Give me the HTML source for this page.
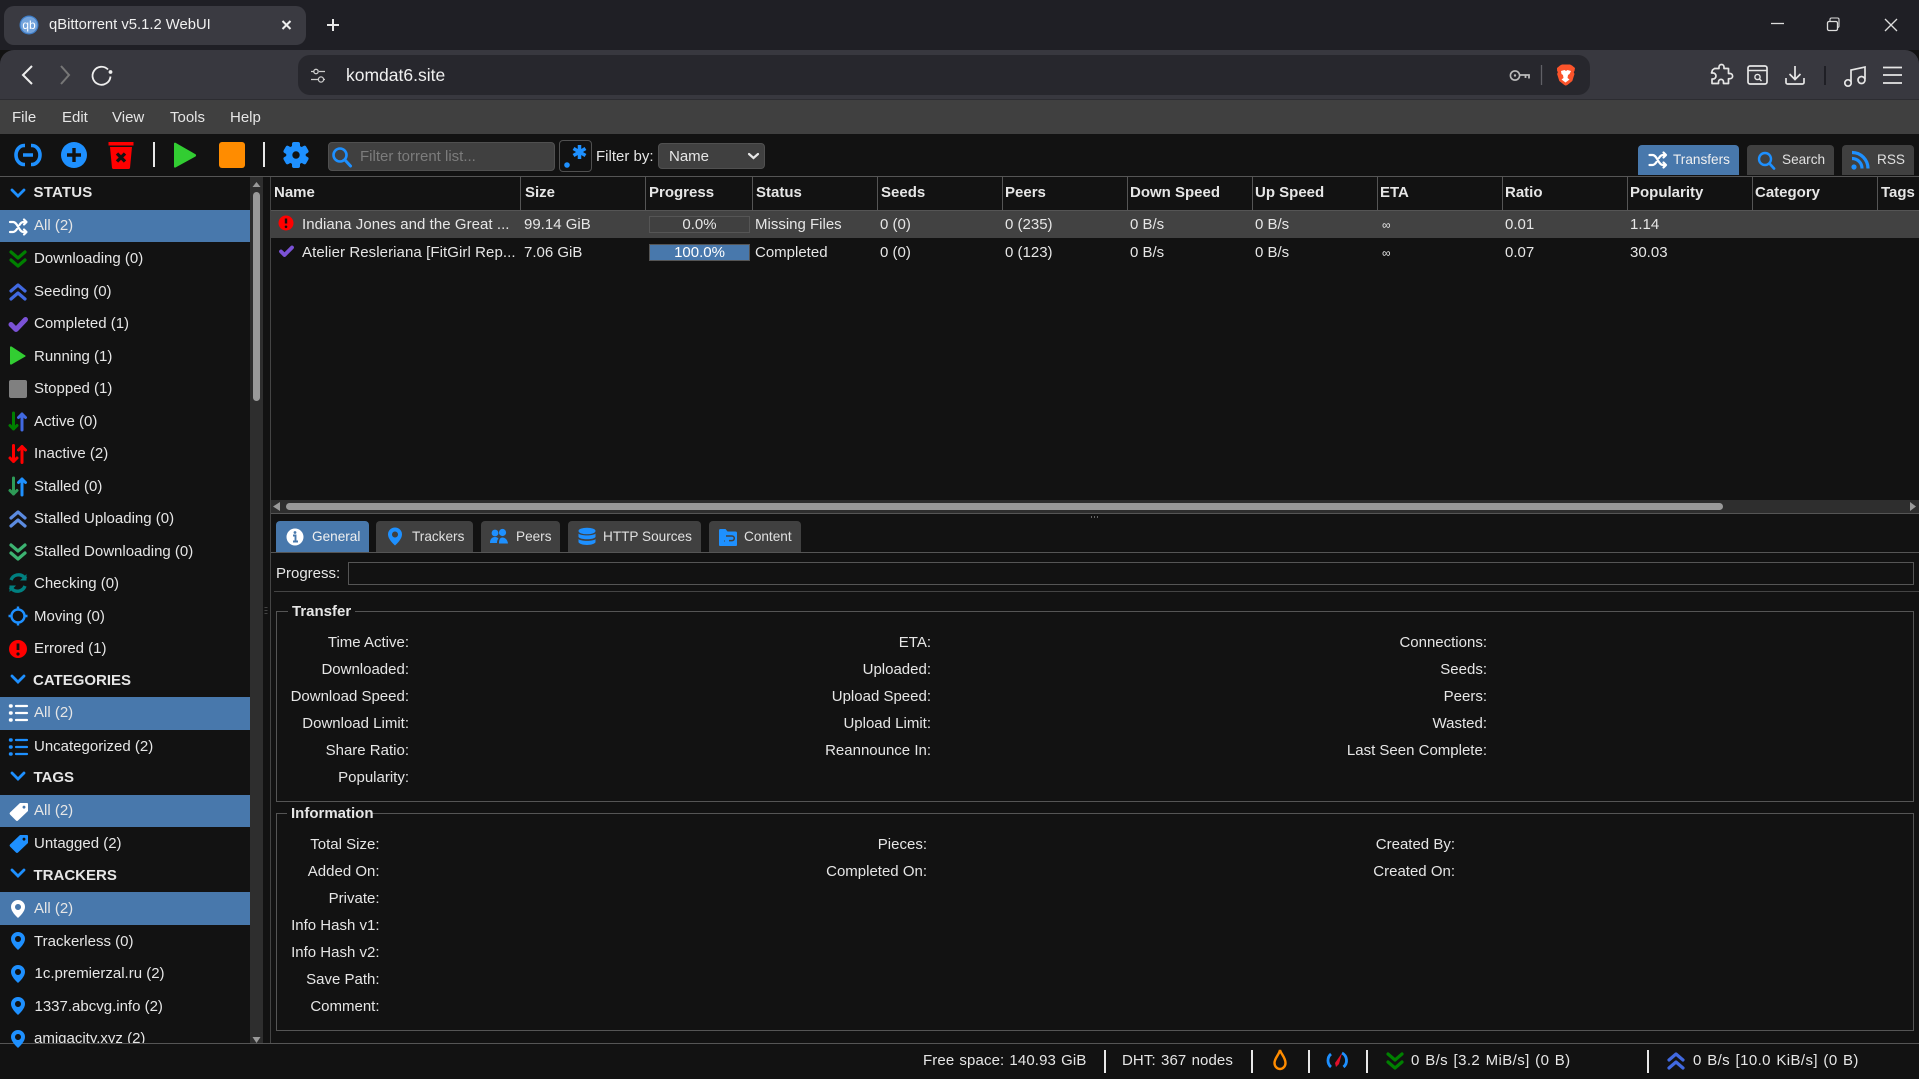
<!DOCTYPE html>
<html><head><meta charset="utf-8"><title>qBittorrent v5.1.2 WebUI</title>
<style>
html,body{margin:0;padding:0;background:#121212;}
body{width:1919px;height:1079px;position:relative;overflow:hidden;font-family:"Liberation Sans",sans-serif;font-size:15px;color:#e6e6e6;}
div{position:absolute;box-sizing:border-box;}
.t{white-space:nowrap;line-height:20px;height:20px;margin-top:1px;}
.b{font-weight:bold;}
.r{text-align:right;width:300px;}
.s{font-size:13.6px;color:#e0e0e0;}
.v{width:1px;top:177px;height:33px;background:#555;}
.sel{left:0;width:250px;background:#4878ac;}
.tab{top:521px;height:31px;background:#404040;border-radius:4px 4px 0 0;}
.rb{top:145px;height:30px;background:#404040;border-radius:4px 4px 0 0;}
.sep{width:2px;background:#e8e8e8;}
svg{position:absolute;left:0;top:0;}
</style></head><body>
<!-- browser chrome -->
<div style="left:0;top:0;width:1919px;height:50px;background:#1f1f25"></div>
<div style="left:4px;top:6px;width:302px;height:39px;background:#3a3a41;border-radius:10px"></div>
<div style="left:0;top:50px;width:1919px;height:50px;background:#38383f;border-radius:14px 14px 0 0;border-bottom:1px solid #2c2c31"></div>
<div style="left:298px;top:55px;width:1292px;height:40px;background:#27272d;border-radius:12px"></div>
<div class="t" style="left:49px;top:14px;font-size:14.8px;color:#f0f0f0">qBittorrent v5.1.2 WebUI</div>
<div class="t" style="left:346px;top:64px;font-size:17.5px;color:#f0f0f0">komdat6.site</div>
<!-- menu -->
<div style="left:0;top:100px;width:1919px;height:34px;background:#404040"></div>
<div class="t" style="left:12px;top:107px">File</div>
<div class="t" style="left:62px;top:107px">Edit</div>
<div class="t" style="left:112px;top:107px">View</div>
<div class="t" style="left:170px;top:107px">Tools</div>
<div class="t" style="left:230px;top:107px">Help</div>
<!-- toolbar -->
<div style="left:0;top:134px;width:1919px;height:42px;background:#121212"></div>
<div class="sep" style="left:153px;top:142px;height:25px"></div>
<div class="sep" style="left:263px;top:142px;height:25px"></div>
<div style="left:219px;top:142px;width:26px;height:26px;background:#ff8c00;border-radius:3px"></div>
<div style="left:328px;top:142px;width:227px;height:29px;background:#404040;border:1px solid #505050;border-radius:4px"></div>
<div class="t" style="left:360px;top:146px;color:#7c7c7c">Filter torrent list...</div>
<div style="left:559px;top:140px;width:33px;height:32px;background:#121212;border:1px solid #505050;border-radius:4px"></div>
<div class="t" style="left:596px;top:146px">Filter by:</div>
<div style="left:658px;top:143px;width:107px;height:26px;background:#404040;border:1px solid #505050;border-radius:4px"></div>
<div class="t" style="left:669px;top:146px">Name</div>
<div class="rb" style="left:1638px;width:101px;background:#4878ac"></div>
<div class="rb" style="left:1747px;width:87px"></div>
<div class="rb" style="left:1842px;width:72px"></div>
<div class="t s" style="left:1673px;top:149px;color:#f0f0f0">Transfers</div>
<div class="t s" style="left:1782px;top:149px">Search</div>
<div class="t s" style="left:1877px;top:149px">RSS</div>
<div style="left:0;top:176px;width:1919px;height:1px;background:#555"></div>
<!-- sidebar -->
<div class="sel" style="top:210px;height:32px"></div>
<div class="sel" style="top:697px;height:33px"></div>
<div class="sel" style="top:795px;height:32px"></div>
<div class="sel" style="top:892px;height:33px"></div>
<div style="left:250px;top:177px;width:13px;height:866px;background:#2e2e2e"></div>
<div style="left:253px;top:192px;width:7px;height:209px;background:#9a9a9a;border-radius:4px"></div>
<div class="t b" style="left:33.5px;top:182px;letter-spacing:.2px">STATUS</div>
<div class="t" style="left:34px;top:215px">All (2)</div>
<div class="t" style="left:34px;top:248px">Downloading (0)</div>
<div class="t" style="left:34px;top:281px">Seeding (0)</div>
<div class="t" style="left:34px;top:313px">Completed (1)</div>
<div class="t" style="left:34px;top:346px">Running (1)</div>
<div class="t" style="left:34px;top:378px">Stopped (1)</div>
<div class="t" style="left:34px;top:411px">Active (0)</div>
<div class="t" style="left:34px;top:443px">Inactive (2)</div>
<div class="t" style="left:34px;top:476px">Stalled (0)</div>
<div class="t" style="left:34px;top:508px">Stalled Uploading (0)</div>
<div class="t" style="left:34px;top:541px">Stalled Downloading (0)</div>
<div class="t" style="left:34px;top:573px">Checking (0)</div>
<div class="t" style="left:34px;top:606px">Moving (0)</div>
<div class="t" style="left:34px;top:638px">Errored (1)</div>
<div class="t b" style="left:33px;top:670px">CATEGORIES</div>
<div class="t" style="left:34px;top:702px">All (2)</div>
<div class="t" style="left:34px;top:736px">Uncategorized (2)</div>
<div class="t b" style="left:33.5px;top:767px">TAGS</div>
<div class="t" style="left:34px;top:800px">All (2)</div>
<div class="t" style="left:34px;top:833px">Untagged (2)</div>
<div class="t b" style="left:33.5px;top:865px">TRACKERS</div>
<div class="t" style="left:34px;top:898px">All (2)</div>
<div class="t" style="left:34px;top:931px">Trackerless (0)</div>
<div class="t" style="left:34.5px;top:963px">1c.premierzal.ru (2)</div>
<div class="t" style="left:34.5px;top:996px">1337.abcvg.info (2)</div>
<div style="left:0;top:1020px;width:250px;height:23px;overflow:hidden"><div class="t" style="left:34px;top:8px">amigacity.xyz (2)</div></div>
<div style="left:270px;top:177px;width:1px;height:866px;background:#444"></div>
<!-- table -->
<div class="v" style="left:520px"></div><div class="v" style="left:645px"></div><div class="v" style="left:752px"></div><div class="v" style="left:877px"></div><div class="v" style="left:1002px"></div><div class="v" style="left:1127px"></div><div class="v" style="left:1252px"></div><div class="v" style="left:1377px"></div><div class="v" style="left:1502px"></div><div class="v" style="left:1627px"></div><div class="v" style="left:1752px"></div><div class="v" style="left:1877px"></div>
<div style="left:271px;top:210px;width:1648px;height:1px;background:#555"></div>
<div class="t b" style="left:274px;top:182px">Name</div>
<div class="t b" style="left:525px;top:182px">Size</div>
<div class="t b" style="left:649px;top:182px">Progress</div>
<div class="t b" style="left:756px;top:182px">Status</div>
<div class="t b" style="left:881px;top:182px">Seeds</div>
<div class="t b" style="left:1005px;top:182px">Peers</div>
<div class="t b" style="left:1130px;top:182px">Down Speed</div>
<div class="t b" style="left:1255px;top:182px">Up Speed</div>
<div class="t b" style="left:1380px;top:182px">ETA</div>
<div class="t b" style="left:1505px;top:182px">Ratio</div>
<div class="t b" style="left:1630px;top:182px">Popularity</div>
<div class="t b" style="left:1755px;top:182px">Category</div>
<div class="t b" style="left:1881px;top:182px">Tags</div>
<div style="left:271px;top:211px;width:1648px;height:27px;background:#424242"></div>
<div class="t" style="left:302px;top:214px;letter-spacing:.05px">Indiana Jones and the Great ...</div>
<div class="t" style="left:524px;top:214px">99.14 GiB</div>
<div style="left:649px;top:216px;width:101px;height:17px;background:#404040;border:1px solid #555"></div>
<div class="t" style="left:649px;top:214px;width:101px;text-align:center">0.0%</div>
<div class="t" style="left:755px;top:214px">Missing Files</div>
<div class="t" style="left:880px;top:214px">0 (0)</div>
<div class="t" style="left:1005px;top:214px">0 (235)</div>
<div class="t" style="left:1130px;top:214px">0 B/s</div>
<div class="t" style="left:1255px;top:214px">0 B/s</div>
<div class="t" style="left:1382px;top:214px;font-size:12px">∞</div>
<div class="t" style="left:1505px;top:214px">0.01</div>
<div class="t" style="left:1630px;top:214px">1.14</div>
<div class="t" style="left:302px;top:242px;letter-spacing:.08px">Atelier Resleriana [FitGirl Rep...</div>
<div class="t" style="left:524px;top:242px">7.06 GiB</div>
<div style="left:649px;top:244px;width:101px;height:17px;background:#4878ac;border:1px solid #555"></div>
<div class="t" style="left:649px;top:242px;width:101px;text-align:center;color:#fff">100.0%</div>
<div class="t" style="left:755px;top:242px">Completed</div>
<div class="t" style="left:880px;top:242px">0 (0)</div>
<div class="t" style="left:1005px;top:242px">0 (123)</div>
<div class="t" style="left:1130px;top:242px">0 B/s</div>
<div class="t" style="left:1255px;top:242px">0 B/s</div>
<div class="t" style="left:1382px;top:242px;font-size:12px">∞</div>
<div class="t" style="left:1505px;top:242px">0.07</div>
<div class="t" style="left:1630px;top:242px">30.03</div>
<!-- h scrollbar -->
<div style="left:271px;top:500px;width:1648px;height:13px;background:#2e2e2e"></div>
<div style="left:286px;top:503px;width:1437px;height:7px;background:#9a9a9a;border-radius:4px"></div>
<div style="left:271px;top:513px;width:1648px;height:1px;background:#555"></div>
<!-- detail tabs -->
<div class="tab" style="left:276px;width:93px;background:#4878ac"></div>
<div class="tab" style="left:376px;width:97px"></div>
<div class="tab" style="left:481px;width:79px"></div>
<div class="tab" style="left:568px;width:133px"></div>
<div class="tab" style="left:709px;width:92px"></div>
<div style="left:271px;top:552px;width:1648px;height:1px;background:#555"></div>
<div class="t s" style="left:312px;top:526px;color:#f0f0f0">General</div>
<div class="t s" style="left:412px;top:526px">Trackers</div>
<div class="t s" style="left:516px;top:526px">Peers</div>
<div class="t s" style="left:603px;top:526px">HTTP Sources</div>
<div class="t s" style="left:744px;top:526px">Content</div>
<div class="t" style="left:276px;top:563px">Progress:</div>
<div style="left:348px;top:562px;width:1566px;height:23px;border:1px solid #555"></div>
<div style="left:274px;top:591px;width:1645px;height:1px;background:#444"></div>
<!-- fieldset transfer -->
<div style="left:276px;top:611px;width:1638px;height:191px;border:1px solid #555"></div>
<div style="left:288px;top:605px;width:67px;height:12px;background:#121212"></div>
<div class="t b" style="left:292px;top:601px">Transfer</div>
<div class="t r" style="left:109px;top:632px">Time Active:</div>
<div class="t r" style="left:109px;top:659px">Downloaded:</div>
<div class="t r" style="left:109px;top:686px">Download Speed:</div>
<div class="t r" style="left:109px;top:713px">Download Limit:</div>
<div class="t r" style="left:109px;top:740px">Share Ratio:</div>
<div class="t r" style="left:109px;top:767px">Popularity:</div>
<div class="t r" style="left:631px;top:632px">ETA:</div>
<div class="t r" style="left:631px;top:659px">Uploaded:</div>
<div class="t r" style="left:631px;top:686px">Upload Speed:</div>
<div class="t r" style="left:631px;top:713px">Upload Limit:</div>
<div class="t r" style="left:631px;top:740px">Reannounce In:</div>
<div class="t r" style="left:1187px;top:632px">Connections:</div>
<div class="t r" style="left:1187px;top:659px">Seeds:</div>
<div class="t r" style="left:1187px;top:686px">Peers:</div>
<div class="t r" style="left:1187px;top:713px">Wasted:</div>
<div class="t r" style="left:1187px;top:740px">Last Seen Complete:</div>
<!-- fieldset info -->
<div style="left:276px;top:813px;width:1638px;height:218px;border:1px solid #555"></div>
<div style="left:287px;top:807px;width:85px;height:12px;background:#121212"></div>
<div class="t b" style="left:291px;top:803px">Information</div>
<div class="t r" style="left:79.5px;top:834px">Total Size:</div>
<div class="t r" style="left:79.5px;top:861px">Added On:</div>
<div class="t r" style="left:79.5px;top:888px">Private:</div>
<div class="t r" style="left:79.5px;top:915px">Info Hash v1:</div>
<div class="t r" style="left:79.5px;top:942px">Info Hash v2:</div>
<div class="t r" style="left:79.5px;top:969px">Save Path:</div>
<div class="t r" style="left:79.5px;top:996px">Comment:</div>
<div class="t r" style="left:627px;top:834px">Pieces:</div>
<div class="t r" style="left:627px;top:861px">Completed On:</div>
<div class="t r" style="left:1155px;top:834px">Created By:</div>
<div class="t r" style="left:1155px;top:861px">Created On:</div>
<!-- status bar -->
<div style="left:0;top:1043px;width:1919px;height:1px;background:#555"></div>
<div class="t" style="left:923px;top:1050px;letter-spacing:.12px;word-spacing:.8px">Free space: 140.93 GiB</div>
<div class="sep" style="left:1104px;top:1050px;height:23px"></div>
<div class="t" style="left:1122px;top:1050px;letter-spacing:.1px;word-spacing:1px">DHT: 367 nodes</div>
<div class="sep" style="left:1251px;top:1050px;height:23px"></div>
<div class="sep" style="left:1308px;top:1050px;height:23px"></div>
<div class="sep" style="left:1366px;top:1050px;height:23px"></div>
<div class="t" style="left:1411px;top:1050px;letter-spacing:.4px;word-spacing:.9px">0 B/s [3.2 MiB/s] (0 B)</div>
<div class="sep" style="left:1647px;top:1050px;height:23px"></div>
<div class="t" style="left:1693px;top:1050px;letter-spacing:.4px;word-spacing:.9px">0 B/s [10.0 KiB/s] (0 B)</div>
<!-- icons -->
<svg width="1919" height="1079" viewBox="0 0 1919 1079" fill="none">
<defs>
<g id="shuf" stroke-width="2.200" stroke-linecap="round" stroke-linejoin="round"><path d="M1.500 5h3c5 0 5.500 10 10.500 10h2M1.500 15h3c2 0 3-1.500 4-3M11 8c1-1.800 2-3 4-3h2"/><path d="M15.500 2.500l2.500 2.500-2.500 2.500M15.500 12.500l2.500 2.500-2.500 2.500"/></g>
<g id="dd" fill="none" stroke-width="3.200" stroke-linecap="round" stroke-linejoin="round"><path d="M3 3l7 6 7-6M3 11l7 6 7-6"/></g>
<g id="du" fill="none" stroke-width="3.200" stroke-linecap="round" stroke-linejoin="round"><path d="M3 9l7-6 7 6M3 17l7-6 7 6"/></g>
<g id="chk" fill="none" stroke-width="5" stroke-linecap="round" stroke-linejoin="round"><path d="M3 10.500l5 5L17.500 5.500"/></g>
<g id="list" fill="none" stroke-width="2.200" stroke-linecap="round"><path d="M7 3h11M7 10h11M7 17h11"/><path d="M1.500 3h.6M1.500 10h.6M1.500 17h.6" stroke-width="3.400"/></g>
<path id="tagp" fill-rule="evenodd" d="M11 1h7a1 1 0 0 1 1 1v7L9 18.500a1.500 1.500 0 0 1-2 0L1 12.500a1.500 1.500 0 0 1 0-2zM15 3.600a1.500 1.500 0 1 0 .01 0z"/>
<path id="pin" fill-rule="evenodd" d="M9 0a7 7 0 0 1 7 7c0 4.500-5 9-7 11-2-2-7-6.500-7-11a7 7 0 0 1 7-7zM9 4a3 3 0 1 0 .01 0z"/>
</defs>
<!-- favicon -->
<circle cx="29" cy="25" r="9.500" fill="#3f7cc4"/><circle cx="29" cy="25" r="8.300" fill="#74a4dc"/>
<text x="29" y="29" font-family="Liberation Sans" font-size="12" fill="#fff" text-anchor="middle">qb</text>
<path d="M282.500 21l8 8M290.500 21l-8 8" stroke="#eee" stroke-width="2" />
<path d="M327 25h12M333 19v12" stroke="#e8e8e8" stroke-width="2"/>
<path d="M1771 23.500h13" stroke="#ddd" stroke-width="1.300"/>
<rect x="1827.500" y="21.500" width="10" height="9" rx="1.500" stroke="#ddd" stroke-width="1.300"/><path d="M1830 21v-1.500a1.500 1.500 0 0 1 1.500-1.500h6a1.500 1.500 0 0 1 1.500 1.500v6.500a1.500 1.500 0 0 1-1.500 1.500" stroke="#ddd" stroke-width="1.100"/>
<path d="M1885 19l12 12M1897 19l-12 12" stroke="#ddd" stroke-width="1.300"/>
<path d="M32 66l-9 9 9 9" stroke="#eee" stroke-width="2"/>
<path d="M61 66l8 9-8 9" stroke="#777" stroke-width="2"/>
<path d="M107.500 69.500a9 9 0 1 0 2.500 7" stroke="#eee" stroke-width="1.800" transform="translate(.5,0)"/><circle cx="110.500" cy="72" r="1.900" fill="#eee"/>
<path d="M311 71.500h3M319 71.500h6M311 79.500h7M324 79.500h1" stroke="#ccc" stroke-width="1.300"/><circle cx="316" cy="71.500" r="2.200" stroke="#ccc" stroke-width="1.300"/><circle cx="321" cy="79.500" r="2.600" stroke="#ccc" stroke-width="1.300"/>
<circle cx="1515" cy="75.500" r="4.600" stroke="#bbb" stroke-width="1.600"/><circle cx="1515" cy="75.500" r="1.200" fill="#bbb"/><path d="M1520 75h9v3.500M1525.500 75v3" stroke="#bbb" stroke-width="1.800"/>
<path d="M1541.500 65v20" stroke="#606066" stroke-width="1.300"/>
<path d="M1557 68l3-2.500 2-1h8l2 1 3 2.500-.5 3-.8 1 .8 2-2.200 7-5 4-1.500.6-1.500-.6-5-4-2.200-7 .8-2-.8-1z" fill="#fb542b"/>
<path d="M1561 71l3.500-1 1.500 1 1.500-1 3.500 1-1.500 3 -1.500 1-.5 3 2 1.500-4 3-4-3 2-1.500-.5-3-1.500-1z" fill="#fff"/>
<path d="M1716 69h4.500v-1.500a2.500 2.500 0 0 1 5 0V69h4.500v5h1.500a2.600 2.600 0 0 1 0 5.200H1730v4.800h-5v-1.600a2.500 2.500 0 0 0-5 0V84h-6.500v-4.500h1a3 3 0 0 0 0-6h-1.500l1-3z" stroke="#e6e6e6" stroke-width="1.700" stroke-linejoin="round" transform="translate(-1.500,-.5)"/>
<rect x="1748" y="66" width="19" height="18" rx="2" stroke="#e6e6e6" stroke-width="1.700"/><path d="M1748 70.500h19" stroke="#e6e6e6" stroke-width="1.500"/><circle cx="1757.500" cy="77" r="2.600" stroke="#e6e6e6" stroke-width="1.400"/><path d="M1759.500 79l2 2" stroke="#e6e6e6" stroke-width="1.400"/>
<path d="M1795 66v13M1789.500 74l5.500 5.500 5.500-5.500M1786 78v4.500a1.500 1.500 0 0 0 1.500 1.500h15a1.500 1.500 0 0 0 1.500-1.500V78" stroke="#e6e6e6" stroke-width="1.700"/>
<path d="M1825 66v19" stroke="#1f1f25" stroke-width="2"/>
<path d="M1851 82V70l14-3v12" stroke="#e6e6e6" stroke-width="1.700"/><circle cx="1848" cy="83" r="3.200" stroke="#e6e6e6" stroke-width="1.700"/><circle cx="1861.500" cy="80" r="3.500" stroke="#e6e6e6" stroke-width="1.700"/>
<path d="M1883 67.500h19M1883 75h19M1883 83h19" stroke="#e6e6e6" stroke-width="1.700"/>
<!-- toolbar icons -->
<path d="M25 145.500h-1a8 9.500 0 0 0 0 19h1M31 145.500h1a8 9.500 0 0 1 0 19h-1" stroke="#1e90ff" stroke-width="3.600"/><path d="M23 155h10" stroke="#1e90ff" stroke-width="3.500"/>
<circle cx="74" cy="155" r="13" fill="#1e90ff"/><path d="M67 155h14M74 148v14" stroke="#121212" stroke-width="3.400"/>
<path d="M108.500 142h25v3.500h-25z" fill="#f00"/><path d="M110 147h22l-2 21a1.500 1.500 0 0 1-1.500 1h-15a1.500 1.500 0 0 1-1.500-1z" fill="#f00"/><path d="M117 153.500l8 8M125 153.500l-8 8" stroke="#121212" stroke-width="3.300"/>
<path d="M174 143.500v23a1 1 0 0 0 1.500 1l20-11a1.500 1.500 0 0 0 0-2.200l-20-11.500a1 1 0 0 0-1.500.7z" fill="#32cd32"/>
<g fill="#1e90ff"><rect x="292" y="142" width="8" height="26" rx="2"/><rect x="292" y="142" width="8" height="26" rx="2" transform="rotate(60 296 155)"/><rect x="292" y="142" width="8" height="26" rx="2" transform="rotate(120 296 155)"/><circle cx="296" cy="155" r="9.800"/></g><circle cx="296" cy="155" r="3.700" fill="#121212"/>
<circle cx="340" cy="155" r="6.500" stroke="#1e90ff" stroke-width="2.600"/><path d="M345 160l5.500 6" stroke="#1e90ff" stroke-width="3" stroke-linecap="round"/>
<circle cx="567" cy="165" r="2.800" fill="#1e90ff"/>
<path d="M579.500 145v14M573.500 148.500l12 7M585.500 148.500l-12 7" stroke="#1e90ff" stroke-width="3.500"/>
<path d="M749 154l4.500 4 4.500-4" stroke="#e8e8e8" stroke-width="2.200" stroke-linecap="round"/>
<!-- right tab icons -->
<use href="#shuf" x="1648" y="150" stroke="#fff"/>
<circle cx="1765" cy="159" r="6" stroke="#1e90ff" stroke-width="2.400"/><path d="M1769.500 163.500l4.500 5" stroke="#1e90ff" stroke-width="2.700" stroke-linecap="round"/>
<circle cx="1854" cy="167" r="2.600" fill="#1e90ff"/><path d="M1852 158.500a10 10 0 0 1 10 10M1852 152.500a16 16 0 0 1 16 16" stroke="#1e90ff" stroke-width="3.200"/>
<!-- sidebar chevrons -->
<path d="M12 190l6 6 6-6" stroke="#1e90ff" stroke-width="2.800" stroke-linecap="round"/>
<path d="M12 676l6 6 6-6" stroke="#1e90ff" stroke-width="2.800" stroke-linecap="round"/>
<path d="M12 773l6 6 6-6" stroke="#1e90ff" stroke-width="2.800" stroke-linecap="round"/>
<path d="M12 870l6 6 6-6" stroke="#1e90ff" stroke-width="2.800" stroke-linecap="round"/>
<path d="M256.500 182l4 5h-8zM256.500 1043l4-6h-8z" fill="#9a9a9a"/>
<!-- sidebar icons -->
<use href="#shuf" x="8.500" y="217" stroke="#fff"/>
<use href="#dd" x="8" y="249" stroke="#008000"/>
<use href="#du" x="8" y="282" stroke="#4169e1"/>
<use href="#chk" x="8" y="314" stroke="#7b52d6"/>
<path d="M10 347.500v16a1 1 0 0 0 1.500 1l13-7.500a1 1 0 0 0 0-2l-13-8.500a1 1 0 0 0-1.500 1z" fill="#32cd32"/>
<rect x="9" y="380" width="18" height="18" rx="2" fill="#808080"/>
<path d="M13.500 413v16M10 425.500l3.500 3.500 3.500-3.500" stroke="#008000" stroke-width="3" stroke-linecap="round" stroke-linejoin="round"/><path d="M22 430v-16M18.500 417.500l3.500-3.500 3.500 3.500" stroke="#4169e1" stroke-width="3" stroke-linecap="round" stroke-linejoin="round"/>
<path d="M13.500 445.500v16M10 458l3.500 3.500 3.500-3.500" stroke="#f00" stroke-width="3" stroke-linecap="round" stroke-linejoin="round"/><path d="M22 462.500v-16M18.500 450l3.500-3.500 3.500 3.500" stroke="#f00" stroke-width="3" stroke-linecap="round" stroke-linejoin="round"/>
<path d="M13.500 478v16M10 490.500l3.500 3.500 3.500-3.500" stroke="#2e9b57" stroke-width="3" stroke-linecap="round" stroke-linejoin="round"/><path d="M22 495v-16M18.500 482.500l3.500-3.500 3.500 3.500" stroke="#1e90ff" stroke-width="3" stroke-linecap="round" stroke-linejoin="round"/>
<use href="#du" x="8" y="509" stroke="#5b8be0"/>
<use href="#dd" x="8" y="542" stroke="#3cb371"/>
<path d="M11 580a8 8 0 0 1 13-3l2 2M25 586a8 8 0 0 1-13 3l-2-2" stroke="#008080" stroke-width="3.400"/><path d="M26.500 574v6.500H20M9.500 592v-6.500H16" fill="#008080"/>
<circle cx="18" cy="616" r="6.500" stroke="#1e90ff" stroke-width="2.400"/><path d="M18 606.500v3M18 622.500v3M8.500 616h3M24.500 616h3" stroke="#1e90ff" stroke-width="2.400"/>
<circle cx="18" cy="649" r="9" fill="#f00"/><path d="M18 643.500v6.500" stroke="#121212" stroke-width="2.800"/><circle cx="18" cy="654" r="1.600" fill="#121212"/>
<use href="#list" x="9" y="703" stroke="#fff"/>
<use href="#list" x="9" y="737" stroke="#1e90ff"/>
<use href="#tagp" x="9" y="802" fill="#fff"/>
<use href="#tagp" x="9" y="834" fill="#1e90ff"/>
<use href="#pin" x="9" y="900" fill="#fff"/>
<use href="#pin" x="9" y="932" fill="#1e90ff"/>
<use href="#pin" x="9" y="965" fill="#1e90ff"/>
<use href="#pin" x="9" y="997" fill="#1e90ff"/>
<g style="clip-path:polygon(0 0,1919px 0,1919px 1043px,0 1043px)"><use href="#pin" x="9" y="1030" fill="#1e90ff"/></g>
<!-- table icons -->
<circle cx="286" cy="223" r="7.500" fill="#f00"/><path d="M286 218.500v5" stroke="#121212" stroke-width="2.400"/><circle cx="286" cy="226.800" r="1.300" fill="#121212"/>
<path d="M281 251.500l3.500 3.500 7.500-7.500" stroke="#7b52d6" stroke-width="3.800" stroke-linecap="round" stroke-linejoin="round"/>
<!-- scroll arrows -->
<path d="M273 506.500l7-4.500v9zM1916 506.500l-6-4.500v9z" fill="#9a9a9a"/>
<path d="M1091 517h1M1094 517h1M1097 517h1" stroke="#666" stroke-width="2"/>
<path d="M266 607v1M266 610v1M266 613v1" stroke="#444" stroke-width="3"/>
<!-- detail tab icons -->
<circle cx="295" cy="537" r="8.500" fill="#fff"/><path d="M293 535.500h2.500v6M293 541.500h5" stroke="#4878ac" stroke-width="1.900"/><circle cx="295" cy="532.500" r="1.400" fill="#4878ac"/>
<use href="#pin" x="386" y="527.500" fill="#1e90ff"/>
<circle cx="495" cy="533" r="3.400" fill="#1e90ff"/><circle cx="502.500" cy="532.500" r="3.600" fill="#1e90ff"/><path d="M490 543c0-4 2-6 5-6 1.500 0 2.500.5 3.500 1.500-1 1-1.500 2.500-1.500 4.500zM499 543.500c0-4 1-6 3.500-6s5 2 5.500 6z" fill="#1e90ff"/>
<ellipse cx="587" cy="531" rx="8.500" ry="3.300" fill="#1e90ff"/><path d="M578.500 533.500c2 2.500 15 2.500 17 0v3.500c-2 3-15 3-17 0zM578.500 539c2 2.500 15 2.500 17 0v3.300c-2 3.600-15 3.600-17 0z" fill="#1e90ff"/>
<path d="M719 530.500a1.500 1.500 0 0 1 1.500-1.500h5l2 2.500h8a1.500 1.500 0 0 1 1.500 1.500v12a1 1 0 0 1-1 1h-16a1 1 0 0 1-1-1z" fill="#1e90ff"/><path d="M726 536h6a2.300 2.300 0 0 1 0 4.600h-3M724 541h.6" stroke="#404040" stroke-width="1.500"/>
<!-- status bar icons -->
<path d="M1280 1050c1 4 5.500 7.500 5.500 13a5.500 6 0 0 1-11 0c0-5 4.500-8 5.500-13z" stroke="#ff8c00" stroke-width="2.400"/>
<path d="M1331 1067a8.500 8.500 0 0 1 0-13" stroke="#1e90ff" stroke-width="2.800"/><path d="M1342 1053a8.500 8.500 0 0 1 1.500 14" stroke="#1e90ff" stroke-width="2.800"/><path d="M1342 1053l-3 11-3 3-1-4z" fill="#e0102a"/>
<use href="#dd" x="1385" y="1051" stroke="#008000"/>
<use href="#du" x="1666" y="1051" stroke="#4169e1"/>
</svg>
</body></html>
